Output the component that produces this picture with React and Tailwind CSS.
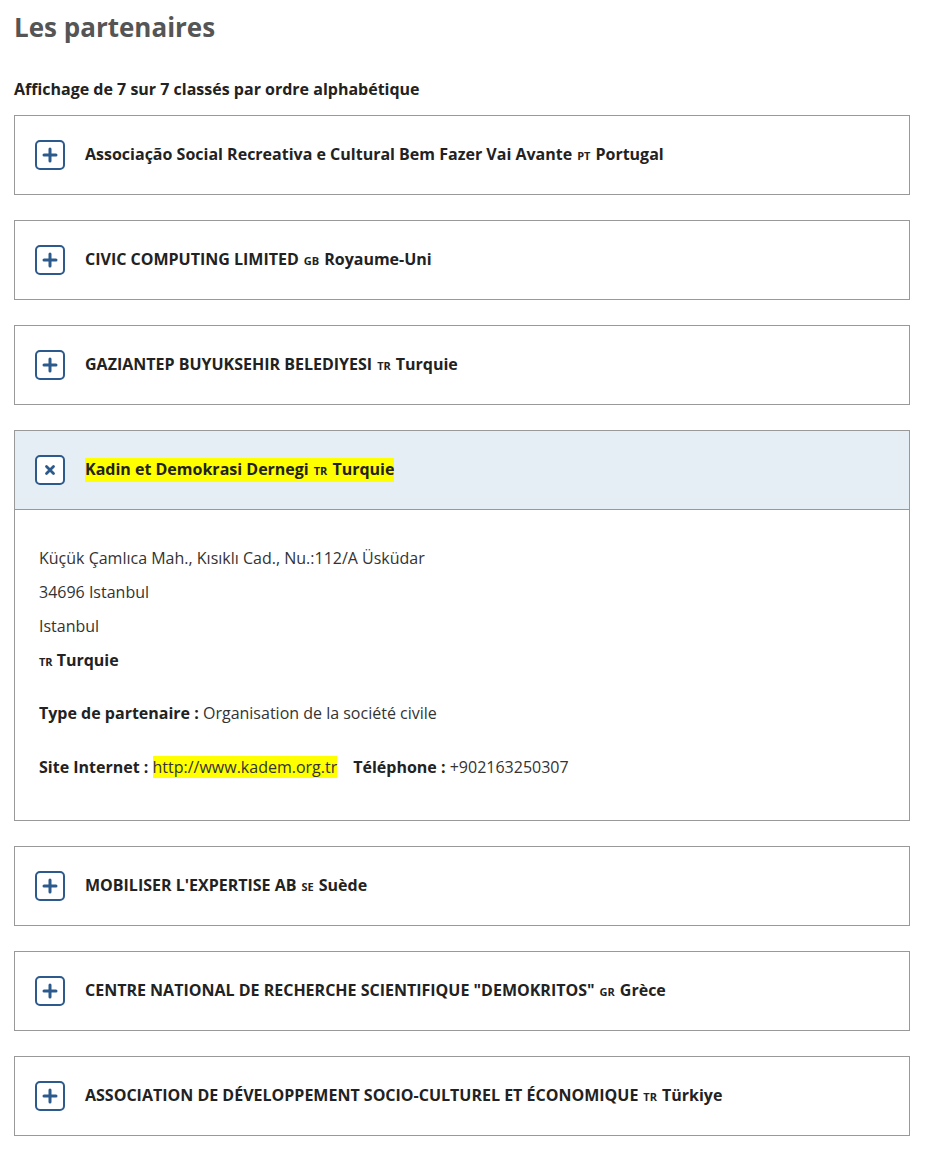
import React, { useState } from 'react';

const partners = [
  { id: 1, name: 'Associação Social Recreativa e Cultural Bem Fazer Vai Avante', code: 'PT', country: 'Portugal' },
  { id: 2, name: 'CIVIC COMPUTING LIMITED', code: 'GB', country: 'Royaume-Uni' },
  { id: 3, name: 'GAZIANTEP BUYUKSEHIR BELEDIYESI', code: 'TR', country: 'Turquie' },
  {
    id: 4,
    name: 'Kadin et Demokrasi Dernegi',
    code: 'TR',
    country: 'Turquie',
    address: ['Küçük Çamlıca Mah., Kısıklı Cad., Nu.:112/A Üsküdar', '34696 Istanbul', 'Istanbul'],
    type: 'Organisation de la société civile',
    site: 'http://www.kadem.org.tr',
    phone: '+902163250307',
  },
  { id: 5, name: "MOBILISER L'EXPERTISE AB", code: 'SE', country: 'Suède' },
  { id: 6, name: 'CENTRE NATIONAL DE RECHERCHE SCIENTIFIQUE "DEMOKRITOS"', code: 'GR', country: 'Grèce' },
  { id: 7, name: 'ASSOCIATION DE DÉVELOPPEMENT SOCIO-CULTUREL ET ÉCONOMIQUE', code: 'TR', country: 'Türkiye' },
];

const ToggleIcon = ({ open }) => (
  <span className="flex h-[30px] w-[30px] shrink-0 items-center justify-center rounded-[5px] border-2 border-[#2c5a8c] bg-white">
    {open ? (
      <svg width="12" height="12" viewBox="0 0 12 12">
        <path d="M2.5 2.5 L9.5 9.5 M9.5 2.5 L2.5 9.5" stroke="#2c5a8c" strokeWidth="2.8" strokeLinecap="round" />
      </svg>
    ) : (
      <svg width="16" height="16" viewBox="0 0 16 16">
        <path d="M8 2 V14 M2 8 H14" stroke="#2c5a8c" strokeWidth="3" strokeLinecap="round" />
      </svg>
    )}
  </span>
);

const Code = ({ code }) => (
  <span className="mx-[5px] text-[11px] font-bold text-[#222]">{code}</span>
);

const App = () => {
  const [openId, setOpenId] = useState(4);

  return (
    <div className="min-h-screen bg-white px-[14px] pt-[8px] text-[#222]" style={{ fontFamily: '"Open Sans", "Liberation Sans", sans-serif' }}>
      <h1 className="text-[26px] font-bold leading-[38px] text-[#555]">Les partenaires</h1>

      <p className="mt-[32px] text-[16px] font-bold leading-[22px] text-[#222]">
        Affichage de 7 sur 7 classés par ordre alphabétique
      </p>

      <div className="mt-[15px] flex w-[896px] flex-col gap-[25px]">
        {partners.map((p) => {
          const open = openId === p.id;
          return (
            <div key={p.id} className="border border-[#999]">
              <button
                onClick={() => setOpenId(open ? null : p.id)}
                className={`flex w-full items-center gap-[20px] px-[20px] py-[24px] text-left ${
                  open ? 'border-b border-[#999] bg-[#e5eef4]' : 'bg-white'
                }`}
              >
                <ToggleIcon open={open} />
                <span className={`text-[16px] font-bold leading-[22px] text-[#222] ${open ? 'bg-[#ffff00]' : ''}`}>
                  {p.name}
                  <Code code={p.code} />
                  {p.country}
                </span>
              </button>

              {open && (
                <div className="px-[24px] pt-[31px] pb-[36px] text-[16px] leading-[34px] text-[#333]">
                  {p.address.map((line) => (
                    <div key={line}>{line}</div>
                  ))}
                  <div className="font-bold text-[#222]">
                    <span className="mr-[4px] text-[11px]">{p.code}</span>
                    {p.country}
                  </div>
                  <div className="mt-[17px]">
                    <span className="font-bold text-[#222]">Type de partenaire : </span>
                    {p.type}
                  </div>
                  <div className="mt-[20px]">
                    <span className="font-bold text-[#222]">Site Internet : </span>
                    <a href={p.site} className="bg-[#ffff00] text-[#333]">
                      {p.site}
                    </a>
                    <span className="ml-[16px] font-bold text-[#222]">Téléphone : </span>
                    {p.phone}
                  </div>
                </div>
              )}
            </div>
          );
        })}
      </div>
      <div className="h-[14px]" />
    </div>
  );
};

export default App;
